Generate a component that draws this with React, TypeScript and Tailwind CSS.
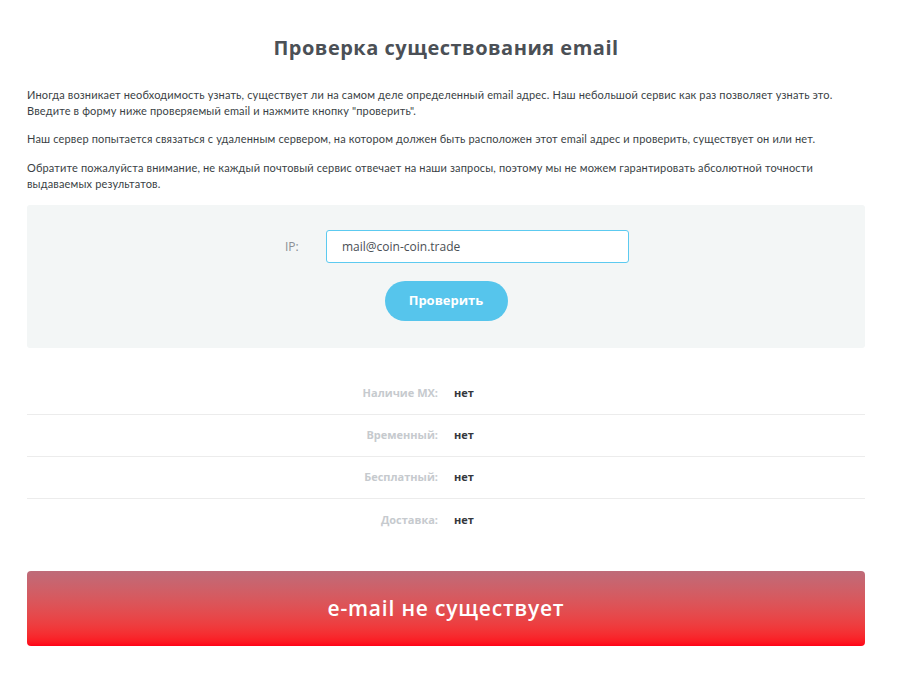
import { useState } from "react";

const rows = [
  { label: "Наличие MX:", value: "нет" },
  { label: "Временный:", value: "нет" },
  { label: "Бесплатный:", value: "нет" },
  { label: "Доставка:", value: "нет" },
];

export default function App() {
  const [email, setEmail] = useState("mail@coin-coin.trade");

  return (
    <div className="min-h-screen bg-white font-['Open_Sans',sans-serif]">
      <div className="w-[838px] ml-[27px] pt-[34px]">
        {/* Title */}
        <h1 className="text-center text-[20px] leading-7 font-bold text-[#4b5056] tracking-[0.5px]">
          Проверка существования email
        </h1>

        {/* Intro */}
        <div className="mt-[25px] text-[11px] leading-4 text-[#3a3f45] font-['Lato',sans-serif] tracking-[0.16px]">
          <p>
            Иногда возникает необходимость узнать, существует ли на самом деле определенный email адрес. Наш небольшой
            сервис как раз позволяет узнать это. Введите в форму ниже проверяемый email и нажмите кнопку "проверить".
          </p>
          <p className="mt-3">
            Наш сервер попытается связаться с удаленным сервером, на котором должен быть расположен этот email адрес и
            проверить, существует он или нет.
          </p>
          <p className="mt-[13px]">
            Обратите пожалуйста внимание, не каждый почтовый сервис отвечает на наши запросы, поэтому мы не можем
            гарантировать абсолютной точности выдаваемых результатов.
          </p>
        </div>

        {/* Form panel */}
        <div className="mt-[13px] h-[143px] rounded-[3px] bg-[#f3f6f6] pt-[25px]">
          <div className="flex items-center pl-[258px]">
            <label className="w-[41px] text-[12px] text-[#8a8f95]">IP:</label>
            <input
              value={email}
              onChange={(e) => setEmail(e.target.value)}
              className="h-[33px] w-[303px] rounded-[3px] border border-[#5ccaf0] bg-white pl-[15px] text-[12px] text-[#4a4f55] outline-none"
            />
          </div>
          <div className="mt-[18px] flex justify-center">
            <button className="h-[40px] w-[123px] rounded-full bg-[#56c5ec] text-[13px] font-bold text-white">
              Проверить
            </button>
          </div>
        </div>

        {/* Results */}
        <div className="mt-[25px]">
          {rows.map((r, i) => (
            <div
              key={r.label}
              className={
                i < rows.length - 1
                  ? "flex h-[42px] items-center border-b border-[#ececec]"
                  : "flex h-[42px] items-center"
              }
            >
              <div className="w-[411px] text-right text-[11px] font-bold text-[#c6cace]">{r.label}</div>
              <div className="ml-[16px] text-[11px] font-bold text-[#34383d]">{r.value}</div>
            </div>
          ))}
        </div>

        {/* Result banner */}
        <div className="mt-[30px] flex h-[75px] items-center justify-center rounded-[4px] bg-gradient-to-b from-[#be6b79] to-[#ff0016]">
          <span className="text-[21px] font-semibold tracking-[0.8px] text-white">e-mail не существует</span>
        </div>
      </div>
    </div>
  );
}
